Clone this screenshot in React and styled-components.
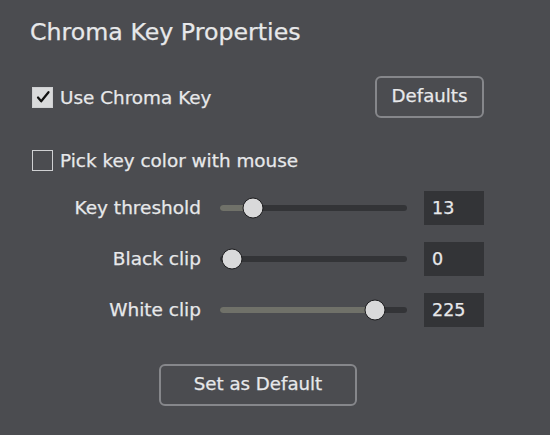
import React from "react";
import styled, { createGlobalStyle } from "styled-components";

const Global = createGlobalStyle`
  html, body { margin: 0; padding: 0; background: #4b4c50; }
  body { width: 550px; height: 435px; overflow: hidden; }
`;

const Panel = styled.div`
  box-sizing: border-box;
  width: 550px;
  height: 435px;
  padding: 17px 0 0 30px;
  background: #4b4c50;
  color: #e7e8ea;
  font-family: "DejaVu Sans", "Liberation Sans", sans-serif;
  -webkit-text-stroke: 0.25px #e7e8ea;
  display: flex;
  flex-direction: column;
`;

const Title = styled.h1`
  margin: 0;
  font-size: 23.7px;
  font-weight: normal;
  line-height: 30px;
  height: 30px;
`;

const TopRow = styled.div`
  margin-top: 29px;
  width: 454px;
  height: 42px;
  display: flex;
  align-items: center;
  justify-content: space-between;
`;

const CheckRow = styled.label`
  display: flex;
  align-items: center;
  gap: 7px;
  padding-left: 2px;
  font-size: 18.4px;
  height: 22px;
  margin-top: ${(p) => p.$mt || 0}px;
`;

const Box = styled.span`
  box-sizing: border-box;
  width: 21px;
  height: 21px;
  border: 1.5px solid #cfd0d2;
  background: ${(p) => (p.$checked ? "#d9dadb" : "transparent")};
  display: flex;
  align-items: center;
  justify-content: center;
`;

const Button = styled.button`
  box-sizing: border-box;
  height: 42px;
  width: ${(p) => p.$w}px;
  border: 2px solid #86878b;
  border-radius: 6px;
  background: transparent;
  color: #e7e8ea;
  -webkit-text-stroke: 0.25px #e7e8ea;
  font-family: "DejaVu Sans", "Liberation Sans", sans-serif;
  font-size: 18.2px;
  padding: 0 0 3px;
`;

const Sliders = styled.div`
  margin-top: 20px;
  display: grid;
  grid-template-columns: 171px 186px 59px;
  column-gap: 19px;
  row-gap: 17px;
  align-items: center;
`;

const Label = styled.div`
  text-align: right;
  font-size: 18.5px;
  line-height: 34px;
`;

const Track = styled.div`
  position: relative;
  height: 6px;
  border-radius: 3px;
  background: #333437;
  margin-right: -1px;
`;

const Fill = styled.div`
  height: 100%;
  border-radius: 3px;
  background: #707169;
`;

const Thumb = styled.div`
  position: absolute;
  top: 50%;
  width: 21px;
  height: 21px;
  box-sizing: border-box;
  border-radius: 50%;
  background: #d9d9da;
  border: 1.5px solid #1d1d1f;
  transform: translate(-50%, -50%);
`;

const ValueBox = styled.div`
  box-sizing: border-box;
  height: 34px;
  background: #333437;
  padding-left: 8px;
  font-size: 17.5px;
  line-height: 34px;
  margin-left: -1px;
`;

const Footer = styled.div`
  margin-top: 37px;
  padding-left: 129px;
`;

const Check = () => (
  <svg width="16" height="14" viewBox="0 0 16 14">
    <path d="M3 7.5 L6.2 11.3 L13.5 2.2" fill="none" stroke="#111" strokeWidth="2.2" strokeLinecap="round" strokeLinejoin="round" />
  </svg>
);

const rows = [
  { label: "Key threshold", value: 13, max: 100 },
  { label: "Black clip", value: 0, max: 255 },
  { label: "White clip", value: 225, max: 255 },
];

function Slider({ value, max }) {
  const left = 12;
  const range = 162;
  const x = left + (value / max) * range;
  return (
    <Track>
      {value > 0 && <Fill style={{ width: x }} />}
      <Thumb style={{ left: x }} />
    </Track>
  );
}

export default function App() {
  return (
    <>
      <Global />
      <Panel>
        <Title>Chroma Key Properties</Title>
        <TopRow>
          <CheckRow>
            <Box $checked><Check /></Box>
            Use Chroma Key
          </CheckRow>
          <Button $w={109}>Defaults</Button>
        </TopRow>
        <CheckRow $mt={31}>
          <Box />
          Pick key color with mouse
        </CheckRow>
        <Sliders>
          {rows.map((r) => (
            <React.Fragment key={r.label}>
              <Label>{r.label}</Label>
              <Slider value={r.value} max={r.max} />
              <ValueBox>{r.value}</ValueBox>
            </React.Fragment>
          ))}
        </Sliders>
        <Footer>
          <Button $w={198}>Set as Default</Button>
        </Footer>
      </Panel>
    </>
  );
}
